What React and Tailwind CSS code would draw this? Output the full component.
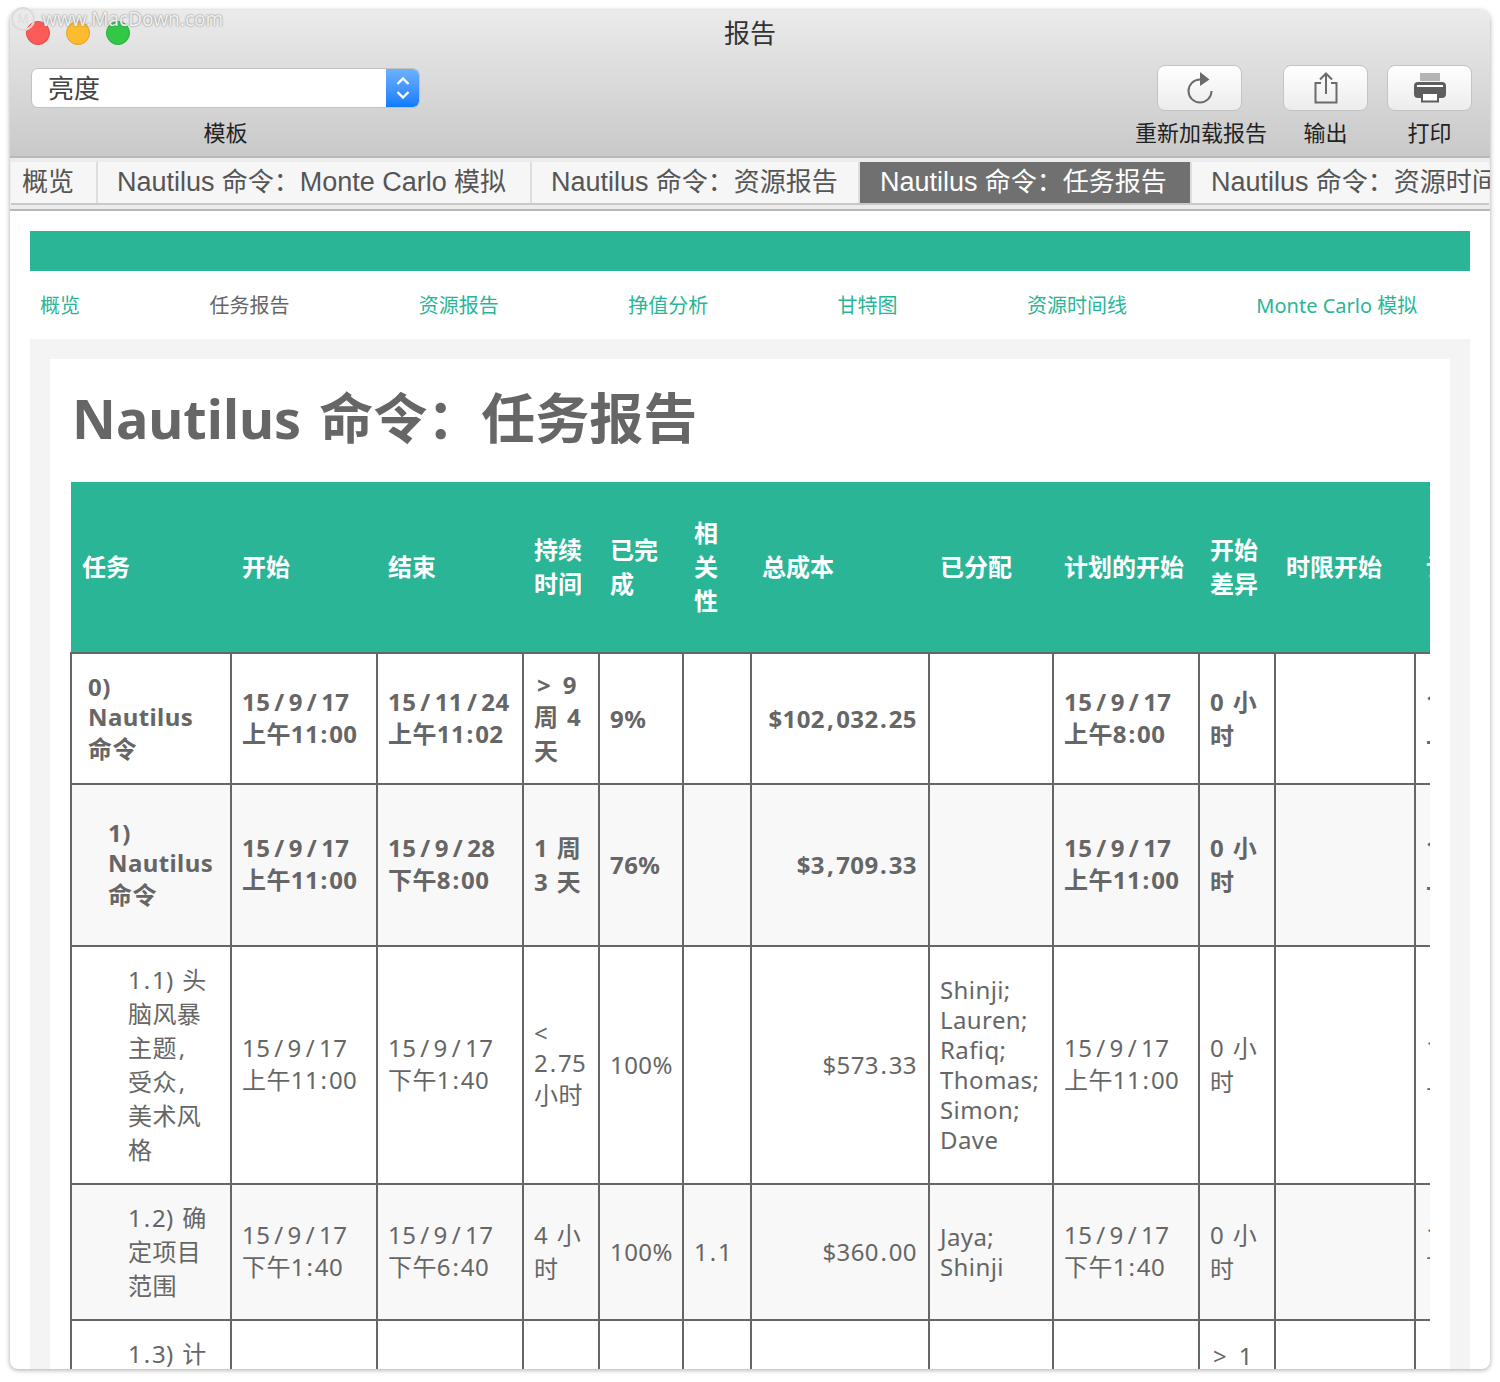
import React from "react";

const FONT = "font-['Noto_Sans','Noto_Sans_CJK_SC',sans-serif]";

const tabs = [
  { name: "概览", cls: "pl-[11px] w-[87px]" },
  { name: "Monte Carlo", rest: " 模拟", cmd: true, cls: "pl-[19px] w-[434px]" },
  { rest: "资源报告", cmd: true, cls: "pl-[19px] w-[328px]" },
  { rest: "任务报告", cmd: true, active: true, cls: "pl-5 w-[332px]" },
  { rest: "资源时间线", cmd: true, cls: "pl-[19px] w-[320px]" },
];

const navLinks = ["概览", "任务报告", "资源报告", "挣值分析", "甘特图", "资源时间线", "Monte Carlo 模拟"];

const colWidths = [160, 146, 146, 76, 84, 68, 178, 124, 146, 76, 140, 146];

const headers = [
  ["任务"],
  ["开始"],
  ["结束"],
  ["持续", "时间"],
  ["已完", "成"],
  ["相", "关", "性"],
  ["总成本"],
  ["已分配"],
  ["计划的开始"],
  ["开始", "差异"],
  ["时限开始"],
  ["计划的完成"],
];

const rows = [
  {
    height: "h-[131px]",
    bold: true,
    indent: "ml-[6px]",
    cells: [
      ["0)", "Nautilus", "命令"],
      ["15/9/17", "上午11:00"],
      ["15/11/24", "上午11:02"],
      ["> 9", "周 4", "天"],
      ["9%"],
      [],
      ["$102,032.25"],
      [],
      ["15/9/17", "上午8:00"],
      ["0 小", "时"],
      [],
      ["15/9/17", "上午8:00"],
    ],
  },
  {
    height: "h-[162px]",
    bold: true,
    bg: "bg-[#f8f8f8]",
    indent: "ml-[26px]",
    cells: [
      ["1)", "Nautilus", "命令"],
      ["15/9/17", "上午11:00"],
      ["15/9/28", "下午8:00"],
      ["1 周", "3 天"],
      ["76%"],
      [],
      ["$3,709.33"],
      [],
      ["15/9/17", "上午11:00"],
      ["0 小", "时"],
      [],
      ["15/9/17", "上午11:00"],
    ],
  },
  {
    height: "h-[238px]",
    indent: "ml-[46px]",
    cells: [
      ["1.1) 头", "脑风暴", "主题,", "受众,", "美术风", "格"],
      ["15/9/17", "上午11:00"],
      ["15/9/17", "下午1:40"],
      ["<", "2.75", "小时"],
      ["100%"],
      [],
      ["$573.33"],
      ["Shinji;", "Lauren;", "Rafiq;", "Thomas;", "Simon;", "Dave"],
      ["15/9/17", "上午11:00"],
      ["0 小", "时"],
      [],
      ["15/9/17", "上午11:00"],
    ],
  },
  {
    height: "h-[136px]",
    bg: "bg-[#f8f8f8]",
    indent: "ml-[46px]",
    cells: [
      ["1.2) 确", "定项目", "范围"],
      ["15/9/17", "下午1:40"],
      ["15/9/17", "下午6:40"],
      ["4 小", "时"],
      ["100%"],
      ["1.1"],
      ["$360.00"],
      ["Jaya;", "Shinji"],
      ["15/9/17", "下午1:40"],
      ["0 小", "时"],
      [],
      ["15/9/17", "下午1:40"],
    ],
  },
];

const wideChars = {
  "/": "px-[4px]",
  ",": "px-[2px]",
  ".": "px-[1.5px]",
  ":": "px-[1.5px]",
  ">": "px-[3px]",
  " ": "px-[1px]",
};

const CellText = ({ text }) =>
  text.split(/([\/,.:> ])/).map((part, i) =>
    wideChars[part] ? (
      <span key={i} className={wideChars[part]}>
        {part}
      </span>
    ) : (
      part
    )
  );

const Lines = ({ lines }) =>
  lines.map((line, i) => (
    <div key={i} className={/[\u4e00-\u9fff]/.test(line) ? "leading-[34px]" : "leading-[30px]"}>
      <CellText text={line} />
    </div>
  ));

const ReloadIcon = () => (
  <svg width="28" height="34" viewBox="0 0 28 34" fill="none">
    <path d="M14 8.5a11.5 11.5 0 1 0 11.5 11.5" stroke="#6b6b6b" strokeWidth="2" />
    <path d="M14 1l9.5 7.5L14 15z" fill="#6b6b6b" />
  </svg>
);

const ShareIcon = () => (
  <svg width="24" height="32" viewBox="0 0 24 32" fill="none" stroke="#6b6b6b" strokeWidth="2">
    <path d="M7 11H1.500v19.500h21V11H17" />
    <path d="M12 22V2M6 7.500L12 1.500l6 6" />
  </svg>
);

const PrintIcon = () => (
  <svg width="32" height="30" viewBox="0 0 32 30" fill="none">
    <rect x="6" y="0" width="20" height="8" fill="#b4b4b4" />
    <path d="M4 9h24a4 4 0 0 1 4 4v8a4 4 0 0 1-4 4h-3v-6H7v6H4a4 4 0 0 1-4-4v-8a4 4 0 0 1 4-4z" fill="#5e5e5e" />
    <rect x="3" y="12" width="26" height="2" fill="#fff" />
    <rect x="8" y="20" width="16" height="8.500" fill="#fff" stroke="#5e5e5e" strokeWidth="2" />
  </svg>
);

const ToolButton = ({ label, children, cls, btnCls = "" }) => (
  <div className={`flex flex-col items-center ${cls}`}>
    <button className={`w-[85px] h-[46px] rounded-lg bg-gradient-to-b from-white to-[#ececec] border border-[#c4c4c4] flex items-center justify-center ${btnCls}`}>
      {children}
    </button>
    <div className="mt-[7px] text-[22px] leading-[28px] text-[#222] whitespace-nowrap">{label}</div>
  </div>
);

const Tab = ({ tab }) => (
  <div
    className={`shrink-0 h-full text-[26px] leading-[40px] whitespace-nowrap border-r-2 border-[#dedede] ${tab.cls} ${
      tab.active ? "bg-[#707070] text-white" : "text-[#555]"
    }`}
  >
    {tab.cmd ? (
      <>
        <span className="text-[27px]">Nautilus</span> 命令：
      </>
    ) : null}
    {tab.cmd && tab.name ? <span className="text-[27px]">{tab.name}</span> : tab.name}
    {tab.rest}
  </div>
);

export default function App() {
  return (
    <div className={`relative w-[1500px] h-[1382px] bg-white p-[10px] pb-[13px] ${FONT}`}>
      {/* watermark */}
      <div className="absolute left-[11px] top-[6px] z-10 flex items-center gap-[7px]">
        <div className="w-6 h-6 rounded-full border-2 border-[#dcdcdc] flex items-center justify-center text-[12px] leading-none text-[#dcdcdc]">
          M
        </div>
        <div className="text-[19px] leading-[26px] text-[#f0f0f0] [text-shadow:0_0_2px_#6a6a6a]">www.MacDown.com</div>
      </div>

      <div className="h-full flex flex-col rounded-t-[10px] rounded-b-[8px] overflow-hidden bg-white shadow-[0_1px_5px_rgba(0,0,0,0.35)]">
        {/* title bar + toolbar */}
        <div className="h-[146px] shrink-0 bg-gradient-to-b from-[#ebebeb] to-[#c9c9c9] flex flex-col">
          <div className="h-[48px] relative flex items-center justify-center pb-[2px]">
            <div className="absolute left-4 top-[11px] flex gap-4">
              <div className="w-6 h-6 rounded-full bg-[#fc5b57] border border-[#e5453f]" />
              <div className="w-6 h-6 rounded-full bg-[#fdbb2f] border border-[#e2a123]" />
              <div className="w-6 h-6 rounded-full bg-[#33c748] border border-[#28ac39]" />
            </div>
            <div className="text-[26px] leading-[34px] text-[#333]">报告</div>
          </div>
          <div className="flex justify-between pl-[21px] pr-[18px] pt-[7px]">
            <div className="w-[389px] flex flex-col items-center pt-[3px]">
              <div className="w-full h-[40px] flex rounded-[7px] bg-white border border-[#c2c2c2] overflow-hidden">
                <div className="flex-1 pl-4 text-[26px] leading-[38px] text-[#444]">亮度</div>
                <div className="w-[33px] bg-gradient-to-b from-[#6cb1fb] to-[#0a7bfe] flex items-center justify-center">
                  <svg width="16" height="28" viewBox="0 0 16 28" fill="none" stroke="#fff" strokeWidth="2.400">
                    <path d="M2.500 10L8 4.500l5.500 5.500M2.500 18L8 23.500l5.500-5.500" />
                  </svg>
                </div>
              </div>
              <div className="mt-[10px] text-[22px] leading-[28px] text-[#222]">模板</div>
            </div>
            <div className="flex">
              <ToolButton label="重新加载报告" cls="w-[132px]" btnCls="mr-[3px]">
                <ReloadIcon />
              </ToolButton>
              <ToolButton label="输出" cls="w-[85px] ml-[16px]">
                <ShareIcon />
              </ToolButton>
              <ToolButton label="打印" cls="w-[85px] ml-[19px]">
                <PrintIcon />
              </ToolButton>
            </div>
          </div>
        </div>

        {/* tab strip */}
        <div className="h-[55px] shrink-0 bg-[#ececec] border-y-2 border-[#b8b8b8] pt-1 px-[1px] overflow-hidden font-['Liberation_Sans','Noto_Sans_CJK_SC',sans-serif]">
          <div className="h-[43px] flex border-b-2 border-[#c8c8c8] bg-[#f6f6f6]">
            {tabs.map((tab, i) => (
              <Tab key={i} tab={tab} />
            ))}
          </div>
        </div>

        {/* report page */}
        <div className="flex-1 min-h-0 px-5 pt-5 overflow-hidden flex flex-col">
          <div className="h-10 shrink-0 bg-[#2bb597]" />
          <div className="h-[68px] shrink-0 flex items-center gap-[129.4px] pl-[10px] pt-[2px] text-[20px] text-[#2bb597]">
            {navLinks.map((link) => (
              <a key={link} className={`whitespace-nowrap ${link === "任务报告" ? "text-[#666]" : ""}`}>
                {link}
              </a>
            ))}
          </div>
          <div className="flex-1 min-h-0 bg-[#f4f4f4] px-5 pt-5">
            <div className="h-full bg-white px-5 overflow-hidden">
              <h1 className="h-[123px] flex items-center pl-[2px] pb-[5px] text-[54px] font-bold text-[#666] whitespace-nowrap">
                <span>Nautilus</span>
                <span className="ml-[18px]">命令：</span>
                <span>任务报告</span>
              </h1>
              <div className="overflow-hidden">
                <table className="table-fixed w-[1490px] border-collapse text-[24px] tracking-[0.4px] text-[#666]">
                  <colgroup>
                    {colWidths.map((w, i) => (
                      <col key={i} style={{ width: w }} />
                    ))}
                  </colgroup>
                  <thead>
                    <tr className="h-[171px] bg-[#2bb597] text-white">
                      {headers.map((lines, i) => (
                        <th key={i} className="pl-[11px] pr-3 text-left font-bold tracking-normal whitespace-nowrap">
                          <Lines lines={lines} />
                        </th>
                      ))}
                    </tr>
                  </thead>
                  <tbody>
                    {rows.map((row, r) => (
                      <tr key={r} className={`${row.height} ${row.bg || "bg-white"} ${row.bold ? "font-bold" : ""}`}>
                        {row.cells.map((lines, i) => (
                          <td
                            key={i}
                            className={`border-2 border-[#666] pl-[10px] pr-[11px] whitespace-nowrap ${i === 6 ? "text-right" : ""}`}
                          >
                            <div className={i === 0 ? row.indent : ""}>
                              <Lines lines={lines} />
                            </div>
                          </td>
                        ))}
                      </tr>
                    ))}
                    <tr className="h-[160px] bg-white">
                      <td className="border-2 border-[#666] pl-[10px] pr-[11px] pt-4 align-top">
                        <div className="ml-[46px] whitespace-nowrap">
                          <Lines lines={["1.3) 计"]} />
                        </div>
                      </td>
                      {colWidths.slice(1).map((w, i) => (
                        <td key={i} className="border-2 border-[#666] pl-[10px] pr-[11px] pt-5 align-top whitespace-nowrap">
                          {i === 8 ? <Lines lines={["> 1"]} /> : null}
                        </td>
                      ))}
                    </tr>
                  </tbody>
                </table>
              </div>
            </div>
          </div>
        </div>
      </div>
    </div>
  );
}
